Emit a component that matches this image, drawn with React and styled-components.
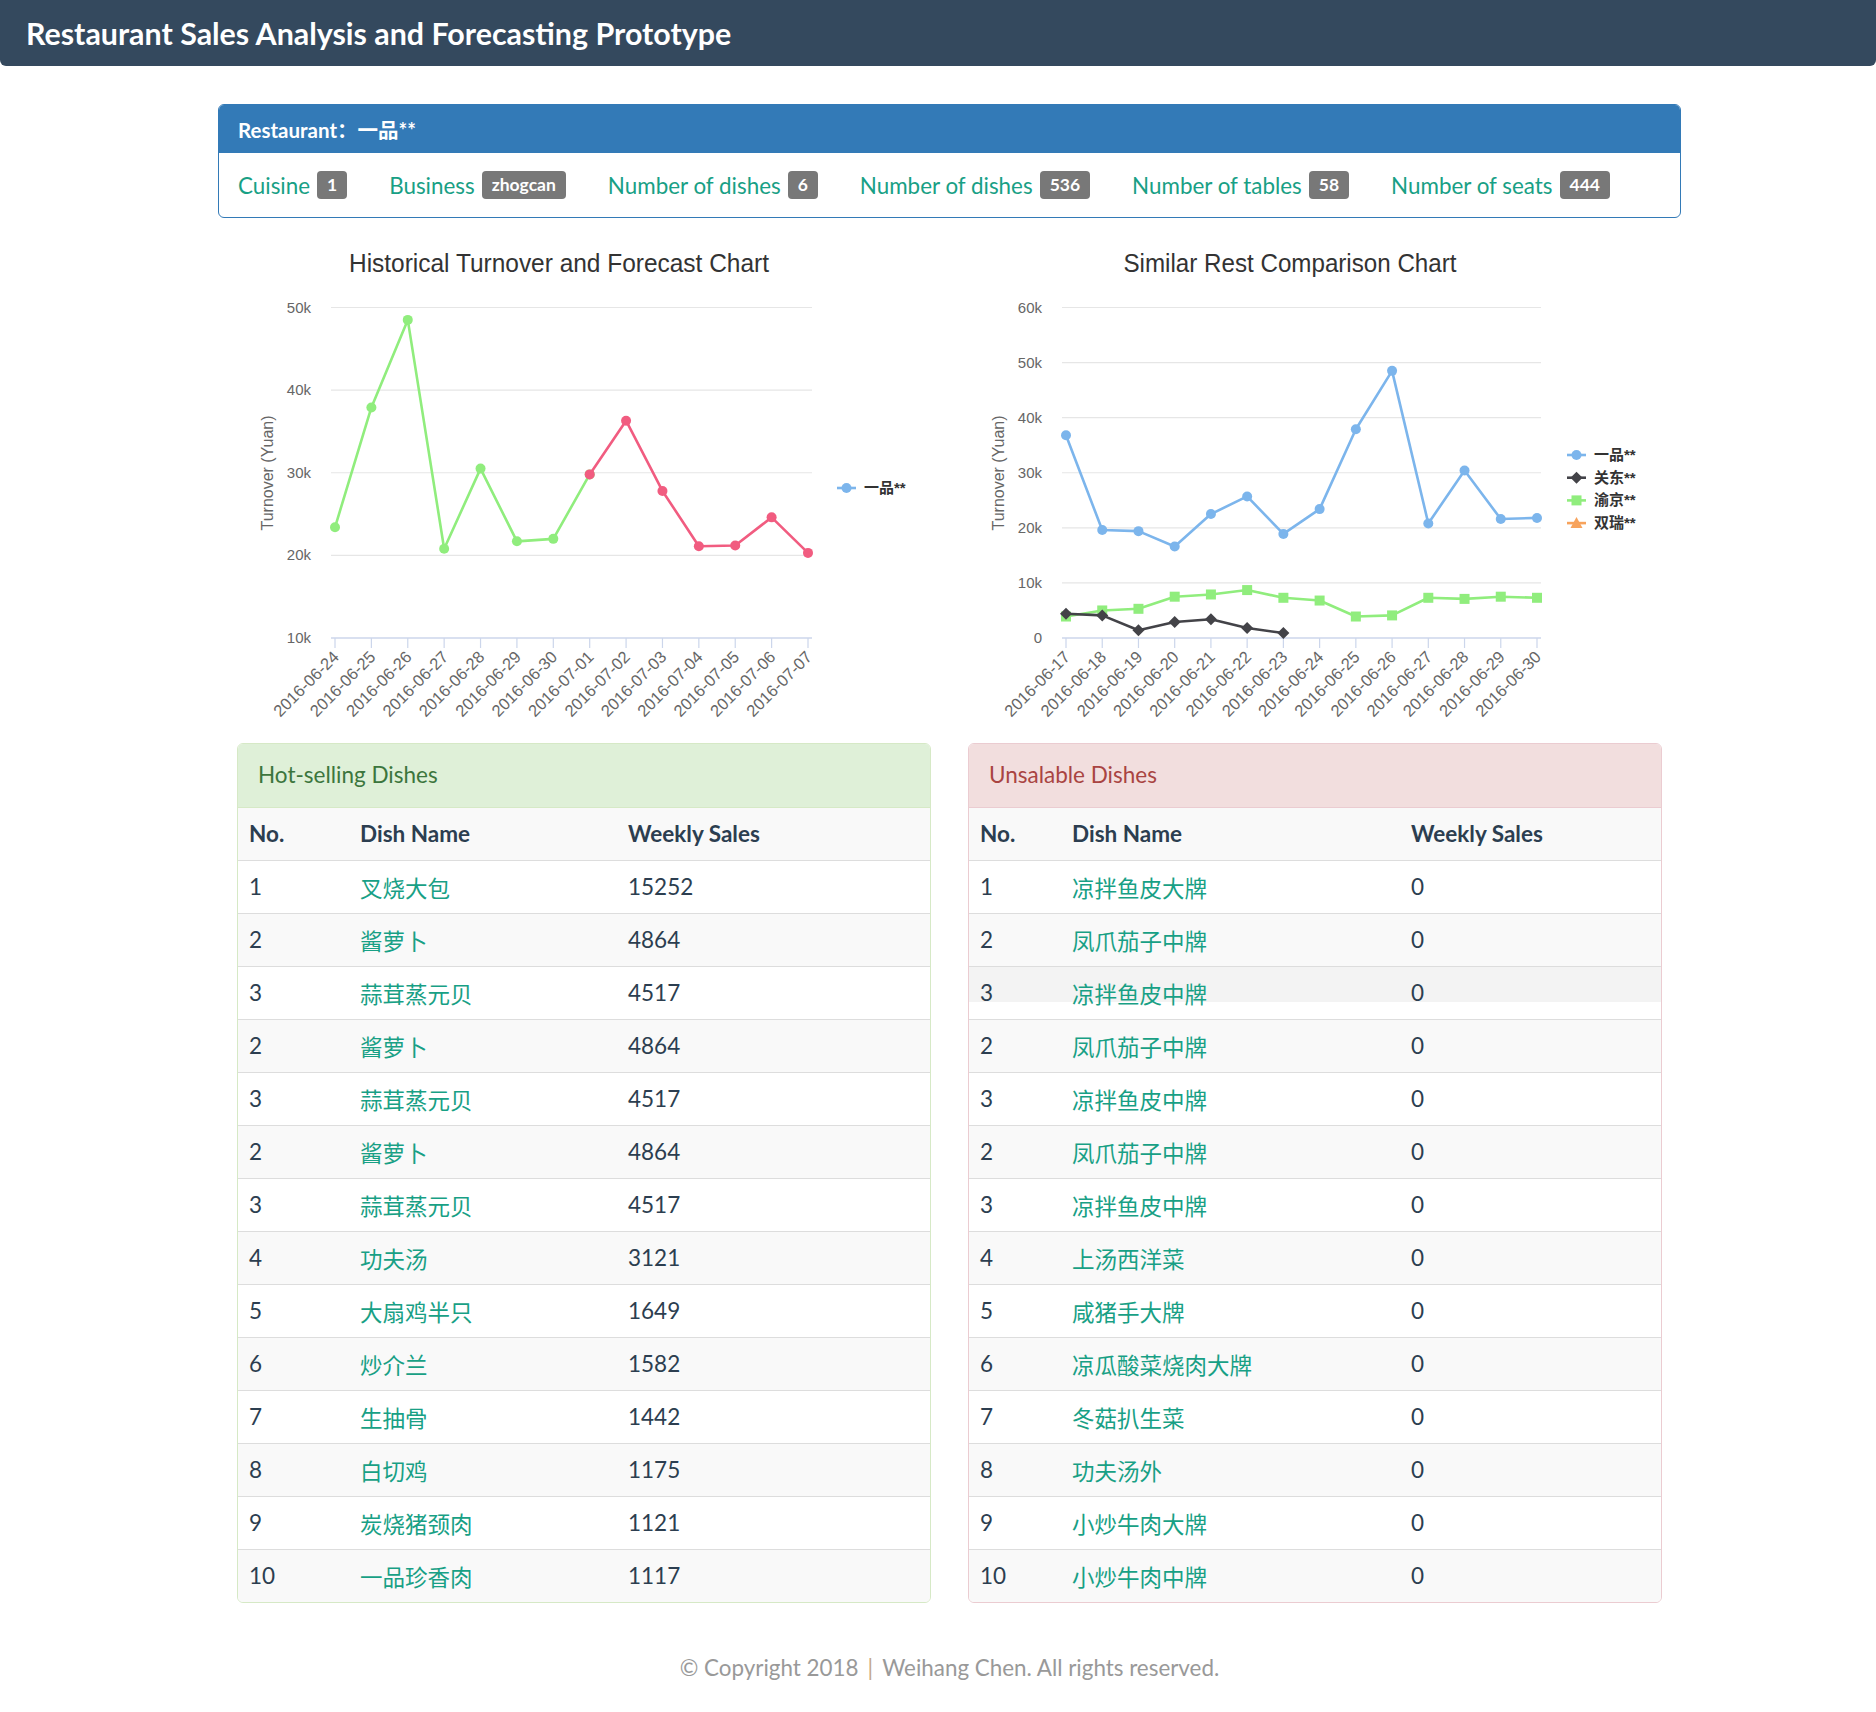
import React from "react";
import styled, { createGlobalStyle } from "styled-components";

const GlobalStyle = createGlobalStyle`
  * { box-sizing: border-box; }
  body {
    margin: 0;
    background: #ffffff;
    font-family: Lato, "Noto Sans CJK SC", sans-serif;
    color: #2c3e50;
  }
`;

const TopBar = styled.header`
  height: 66px;
  background: #34495e;
  border-radius: 0 0 6px 6px;
  display: flex;
  align-items: center;
  padding-left: 26px;
`;

const AppTitle = styled.h1`
  margin: 0;
  color: #ffffff;
  font-size: 30.4px;
  font-weight: 700;
`;

const Main = styled.main`
  width: 1463px;
  margin: 38px 0 0 218px;
`;

const InfoPanel = styled.section`
  border: 1px solid #337ab7;
  border-radius: 6px;
  overflow: hidden;
`;

const InfoHeading = styled.div`
  height: 48px;
  background: #337ab7;
  color: #ffffff;
  display: flex;
  align-items: center;
  padding: 0 19px;
  font-size: 20.5px;
  font-weight: 700;
`;

const InfoBody = styled.div`
  height: 64px;
  display: flex;
  align-items: center;
  gap: 42px;
  padding: 0 19px;
`;

const Stat = styled.span`
  display: inline-flex;
  align-items: center;
  gap: 7px;
  color: #18a085;
  font-size: 22.4px;
`;

const Badge = styled.span`
  height: 28px;
  line-height: 28px;
  padding: 0 10px;
  border-radius: 4px;
  background: #787878;
  color: #ffffff;
  font-size: 17.5px;
  font-weight: 700;
`;

const TwoCols = styled.div`
  display: grid;
  grid-template-columns: 1fr 1fr;
  gap: 37px;
  padding: 0 19px;
`;

const ChartSvg = styled.svg`
  display: block;
  font-family: "Liberation Sans", "Noto Sans CJK SC", sans-serif;
`;

const ChartTitle = styled.text`
  font-size: 25px;
  fill: #333333;
`;

const AxisLabel = styled.text`
  font-size: ${(p) => p.$size || 15}px;
  fill: #666666;
`;

const LegendLabel = styled.text`
  font-size: 15px;
  font-weight: 700;
  fill: #333333;
`;

const DishPanel = styled.section`
  border: 1px solid ${(p) => p.$border};
  border-radius: 6px;
  overflow: hidden;
`;

const DishHeading = styled.div`
  height: 64px;
  display: flex;
  align-items: center;
  padding: 0 20px 2px;
  background: ${(p) => p.$bg};
  color: ${(p) => p.$color};
  border-bottom: 1px solid ${(p) => p.$border};
  font-size: 22.5px;
`;

const DishTable = styled.table`
  width: 100%;
  border-collapse: collapse;
  table-layout: fixed;
  font-size: 22.5px;
`;

const Col = styled.col`
  width: ${(p) => p.$w}px;
`;

const Row = styled.tr`
  height: ${(p) => (p.$head ? 52 : 53)}px;
  background: ${(p) =>
    p.$glitch
      ? "linear-gradient(#f3f3f3 0 68%, #ffffff 68%)"
      : p.$shade
      ? "#f9f9f9"
      : "#ffffff"};
  & + & {
    border-top: 1px solid #dddddd;
  }
`;

const HeadCell = styled.th`
  padding: 0 11px;
  text-align: left;
  font-weight: 700;
`;

const Cell = styled.td`
  padding: 0 11px;
  color: ${(p) => (p.$link ? "#18a085" : "#2c3e50")};
  white-space: nowrap;
`;

const Footer = styled.footer`
  margin-top: 50px;
  padding-bottom: 28px;
  text-align: center;
  color: #999999;
  font-size: 22.4px;
  line-height: 30px;
`;

const Divider = styled.span`
  margin: 0 9px;
  color: #c4a98a;
`;

const Marker = ({ type, x, y, color }) => {
  if (type === "square") return <rect x={x - 5} y={y - 5} width={10} height={10} fill={color} />;
  if (type === "diamond")
    return <path d={`M${x} ${y - 6}L${x + 6} ${y}L${x} ${y + 6}L${x - 6} ${y}Z`} fill={color} />;
  if (type === "triangle")
    return <path d={`M${x} ${y - 6}L${x + 6} ${y + 5}L${x - 6} ${y + 5}Z`} fill={color} />;
  return <circle cx={x} cy={y} r={5} fill={color} />;
};

const TrendChart = ({ title, titleWidth, categories, min, max, step, series, legend, right = 575 }) => {
  const top = 89.5;
  const bottom = 420;
  const left = 94;
  const x0 = left + 4;
  const dx = (right - left - 8) / (categories.length - 1);
  const px = (i) => x0 + i * dx;
  const py = (v) => bottom - ((v - min) / (max - min)) * (bottom - top);
  const ticks = [];
  for (let v = min; v <= max; v += step) ticks.push(v);

  return (
    <ChartSvg width={694} height={525} viewBox="0 0 694 525">
      <ChartTitle x={322} y={54} textAnchor="middle" textLength={titleWidth} lengthAdjust="spacingAndGlyphs">
        {title}
      </ChartTitle>
      {ticks.map((v) => (
        <g key={v}>
          <line x1={left} x2={right} y1={py(v)} y2={py(v)} stroke={v === min ? "#ccd6eb" : "#e6e6e6"} strokeWidth={v === min ? 1.5 : 1.2} />
          <AxisLabel x={left - 20} y={py(v) + 5} textAnchor="end">
            {v === 0 ? "0" : `${v / 1000}k`}
          </AxisLabel>
        </g>
      ))}
      {categories.map((c, i) => (
        <g key={c}>
          <line x1={px(i)} x2={px(i)} y1={bottom} y2={bottom + 10} stroke="#ccd6eb" strokeWidth={1.2} />
          <AxisLabel $size={16.5} x={px(i) + 5} y={bottom + 20} textAnchor="end" transform={`rotate(-45 ${px(i) + 5} ${bottom + 20})`}>
            {c}
          </AxisLabel>
        </g>
      ))}
      <AxisLabel $size={16} x={36} y={255} textAnchor="middle" transform="rotate(-90 36 255)">
        Turnover (Yuan)
      </AxisLabel>
      {series.map((s) => (
        <g key={s.name}>
          <polyline
            points={s.data.map((v, i) => `${px(i + s.start)},${py(v)}`).join(" ")}
            fill="none"
            stroke={s.color}
            strokeWidth={2.6}
            strokeLinejoin="round"
          />
          {s.data.map((v, i) => (
            <Marker key={i} type={s.marker} x={px(i + s.start)} y={py(v)} color={s.color} />
          ))}
        </g>
      ))}
      {legend.items.map((item, i) => {
        const ly = legend.y + i * 22.7;
        return (
          <g key={item.name}>
            <line x1={legend.x} x2={legend.x + 19} y1={ly} y2={ly} stroke={item.color} strokeWidth={2.6} />
            <Marker type={item.marker} x={legend.x + 9.5} y={ly} color={item.color} />
            <LegendLabel x={legend.x + 27} y={ly + 5}>
              {item.name}
            </LegendLabel>
          </g>
        );
      })}
    </ChartSvg>
  );
};

const days = (month, from, count) =>
  Array.from({ length: count }, (_, i) => {
    let d = from + i;
    let m = month;
    if (d > 30) {
      d -= 30;
      m += 1;
    }
    return `2016-0${m}-${String(d).padStart(2, "0")}`;
  });

const k = (arr) => arr.map((v) => v * 1000);

const historySeries = [
  { name: "history", color: "#90ed7d", marker: "circle", start: 0, data: k([23.4, 37.9, 48.5, 20.8, 30.5, 21.7, 22.0, 29.8]) },
  { name: "forecast", color: "#f15c80", marker: "circle", start: 7, data: k([29.8, 36.3, 27.8, 21.1, 21.2, 24.6, 20.3]) },
];

const compareSeries = [
  { name: "一品**", color: "#7cb5ec", marker: "circle", start: 0, data: k([36.8, 19.6, 19.4, 16.6, 22.5, 25.7, 18.9, 23.4, 37.9, 48.5, 20.8, 30.4, 21.6, 21.8]) },
  { name: "渝京**", color: "#90ed7d", marker: "square", start: 0, data: k([3.9, 5.0, 5.3, 7.5, 7.9, 8.7, 7.3, 6.8, 3.9, 4.1, 7.3, 7.1, 7.5, 7.3]) },
  { name: "关东**", color: "#434348", marker: "diamond", start: 0, data: k([4.4, 4.1, 1.4, 2.9, 3.4, 1.8, 0.9]) },
];

const compareLegend = {
  x: 599,
  y: 237,
  items: [
    { name: "一品**", color: "#7cb5ec", marker: "circle" },
    { name: "关东**", color: "#434348", marker: "diamond" },
    { name: "渝京**", color: "#90ed7d", marker: "square" },
    { name: "双瑞**", color: "#f7a35c", marker: "triangle" },
  ],
};

const historyLegend = { x: 600, y: 270, items: [{ name: "一品**", color: "#7cb5ec", marker: "circle" }] };

const stats = [
  ["Cuisine", "1"],
  ["Business", "zhogcan"],
  ["Number of dishes", "6"],
  ["Number of dishes", "536"],
  ["Number of tables", "58"],
  ["Number of seats", "444"],
];

const hotDishes = [
  [1, "叉烧大包", 15252],
  [2, "酱萝卜", 4864],
  [3, "蒜茸蒸元贝", 4517],
  [2, "酱萝卜", 4864],
  [3, "蒜茸蒸元贝", 4517],
  [2, "酱萝卜", 4864],
  [3, "蒜茸蒸元贝", 4517],
  [4, "功夫汤", 3121],
  [5, "大扇鸡半只", 1649],
  [6, "炒介兰", 1582],
  [7, "生抽骨", 1442],
  [8, "白切鸡", 1175],
  [9, "炭烧猪颈肉", 1121],
  [10, "一品珍香肉", 1117],
];

const coldDishes = [
  [1, "凉拌鱼皮大牌", 0],
  [2, "凤爪茄子中牌", 0],
  [3, "凉拌鱼皮中牌", 0],
  [2, "凤爪茄子中牌", 0],
  [3, "凉拌鱼皮中牌", 0],
  [2, "凤爪茄子中牌", 0],
  [3, "凉拌鱼皮中牌", 0],
  [4, "上汤西洋菜", 0],
  [5, "咸猪手大牌", 0],
  [6, "凉瓜酸菜烧肉大牌", 0],
  [7, "冬菇扒生菜", 0],
  [8, "功夫汤外", 0],
  [9, "小炒牛肉大牌", 0],
  [10, "小炒牛肉中牌", 0],
];

const DishList = ({ title, tone, cols, rows, glitchRow }) => (
  <DishPanel $border={tone.border}>
    <DishHeading $bg={tone.bg} $color={tone.color} $border={tone.border}>
      {title}
    </DishHeading>
    <DishTable>
      <colgroup>
        {cols.map((w, i) => (
          <Col key={i} $w={w} />
        ))}
      </colgroup>
      <tbody>
        <Row $head $shade>
          <HeadCell>No.</HeadCell>
          <HeadCell>Dish Name</HeadCell>
          <HeadCell>Weekly Sales</HeadCell>
        </Row>
        {rows.map(([no, name, sales], i) => (
          <Row key={i} $shade={i % 2 === 1} $glitch={i === glitchRow}>
            <Cell>{no}</Cell>
            <Cell $link>{name}</Cell>
            <Cell>{sales}</Cell>
          </Row>
        ))}
      </tbody>
    </DishTable>
  </DishPanel>
);

const App = () => (
  <>
    <GlobalStyle />
    <TopBar>
      <AppTitle>Restaurant Sales Analysis and Forecasting Prototype</AppTitle>
    </TopBar>
    <Main>
      <InfoPanel>
        <InfoHeading>Restaurant：一品**</InfoHeading>
        <InfoBody>
          {stats.map(([label, value], i) => (
            <Stat key={i}>
              {label}
              <Badge>{value}</Badge>
            </Stat>
          ))}
        </InfoBody>
      </InfoPanel>
      <TwoCols>
        <TrendChart
          title="Historical Turnover and Forecast Chart"
          titleWidth={420}
          categories={days(6, 24, 14)}
          min={10000}
          max={50000}
          step={10000}
          series={historySeries}
          legend={historyLegend}
        />
        <TrendChart
          title="Similar Rest Comparison Chart"
          titleWidth={333}
          categories={days(6, 17, 14)}
          min={0}
          max={60000}
          step={10000}
          series={compareSeries}
          legend={compareLegend}
          right={573}
        />
      </TwoCols>
      <TwoCols>
        <DishList
          title="Hot-selling Dishes"
          tone={{ bg: "#dff0d8", color: "#3c763d", border: "#d6e9c6" }}
          cols={[111, 268, 313]}
          rows={hotDishes}
        />
        <DishList
          title="Unsalable Dishes"
          tone={{ bg: "#f2dede", color: "#a94442", border: "#ebccd1" }}
          cols={[92, 339, 261]}
          rows={coldDishes}
          glitchRow={2}
        />
      </TwoCols>
      <Footer>
        © Copyright 2018<Divider>|</Divider>Weihang Chen. All rights reserved.
      </Footer>
    </Main>
  </>
);

export default App;
